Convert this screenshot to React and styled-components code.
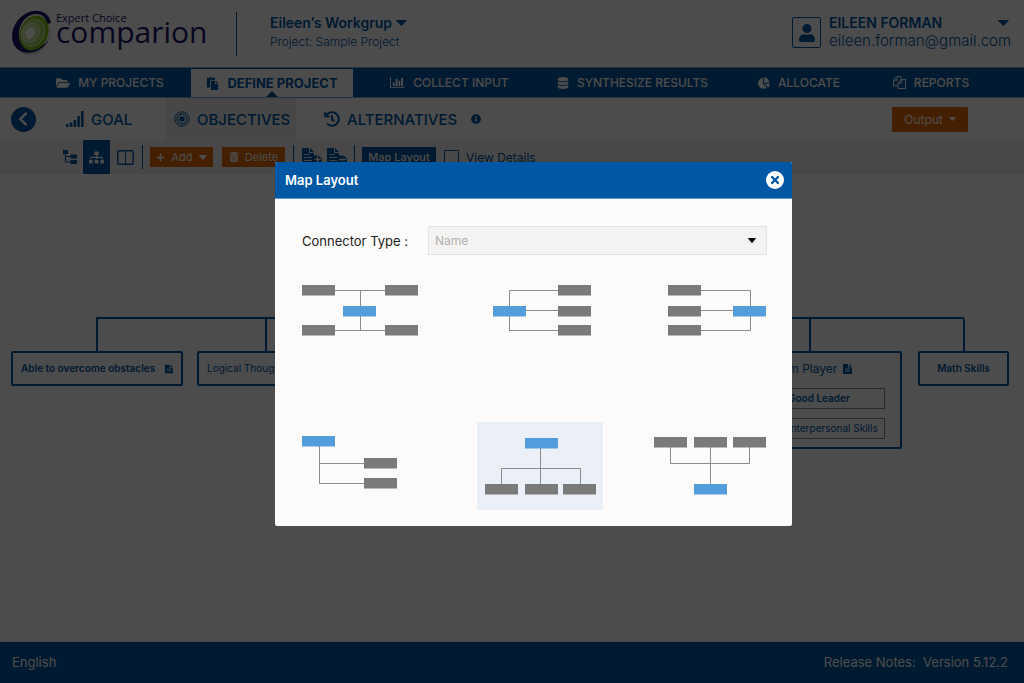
import React from "react";
import styled, { createGlobalStyle, css } from "styled-components";
import {
  FaCaretDown,
  FaChartPie,
  FaChevronLeft,
  FaDatabase,
  FaFolderOpen,
  FaHistory,
  FaInfoCircle,
  FaPaste,
  FaPlus,
  FaSitemap,
  FaTimes,
  FaTrashAlt,
  FaUser,
} from "react-icons/fa";

const blue = "#0057a4";
const orange = "#e66c00";

const GlobalStyle = createGlobalStyle`
  *, *::before, *::after { box-sizing: border-box; }
  body {
    margin: 0;
    background: #ffffff;
    color: ${blue};
    font-family: Inter, "Liberation Sans", sans-serif;
    font-size: 13px;
  }
  button, input, select { font: inherit; color: inherit; }
  button { cursor: pointer; }
`;

const Page = styled.div`
  display: flex;
  flex-direction: column;
  min-height: 100vh;
`;

/* ---------- header ---------- */

const Header = styled.header`
  display: flex;
  align-items: center;
  height: 68px;
  padding: 0 15px 0 12px;
  border-bottom: 1px solid #7fb0dc;
`;

const Logo = styled.a`
  display: flex;
  gap: 2px;
  width: 224px;
  color: #1c1464;
  text-decoration: none;
  font-family: "Open Sans", "Noto Sans", sans-serif;
  font-weight: 500;
`;

const LogoText = styled.span`
  display: flex;
  flex-direction: column;
`;

const LogoSmall = styled.span`
  padding-top: 3px;
  font-size: 11px;
  line-height: 12px;
`;

const LogoLarge = styled.span`
  font-size: 30px;
  line-height: 16px;
`;

const Workgroup = styled.div`
  display: flex;
  flex-direction: column;
  justify-content: center;
  gap: 2px;
  height: 44px;
  padding: 0 0 4px 33px;
  border-left: 1px solid ${blue};
`;

const PlainButton = styled.button`
  display: flex;
  align-items: center;
  gap: 4px;
  padding: 0;
  border: 0;
  background: none;
  font-size: 14px;
  font-weight: 600;
  line-height: 18px;
`;

const ProjectName = styled.span`
  font-size: 12px;
  font-weight: 300;
  line-height: 16px;
`;

const Account = styled.div`
  display: flex;
  align-items: center;
  gap: 8px;
  margin-left: auto;
`;

const Avatar = styled.span`
  display: grid;
  place-items: center;
  width: 29px;
  height: 31px;
  margin-bottom: 2px;
  border: 1px solid ${blue};
  border-radius: 2px;
`;

const AccountText = styled.div`
  display: flex;
  flex-direction: column;
  width: 180px;
  padding-bottom: 4px;
`;

const AccountButton = styled(PlainButton)`
  justify-content: space-between;
`;

const Email = styled.span`
  font-size: 15px;
  font-weight: 300;
  line-height: 18px;
`;

/* ---------- navigation ---------- */

const Nav = styled.nav`
  display: grid;
  grid-template-columns: 162fr 162fr 193fr 173fr 160fr 104fr;
  height: 30px;
  padding: 0 41px 0 29px;
  background: ${blue};
  border-bottom: 1px solid #7fb0dc;
`;

const NavLink = styled.a`
  position: relative;
  display: flex;
  align-items: center;
  justify-content: center;
  gap: 8px;
  color: #ffffff;
  font-size: 12px;
  font-weight: 500;
  text-decoration: none;
  white-space: nowrap;
  svg { flex: none; }
  ${(p) =>
    p.$active &&
    css`
      margin-top: 1px;
      background: #ffffff;
      color: ${blue};
      font-size: 13px;
      font-weight: 700;
      &::after {
        content: "";
        position: absolute;
        bottom: 0;
        left: calc(50% - 6px);
        border: 6px solid transparent;
        border-top-width: 0;
        border-bottom-color: ${blue};
      }
    `}
`;

const SubNav = styled.nav`
  display: flex;
  align-items: center;
  height: 42px;
  padding: 0 56px 0 11px;
`;

const BackButton = styled.button`
  display: grid;
  place-items: center;
  width: 25px;
  height: 25px;
  margin-right: 22px;
  padding: 0 2px 0 0;
  border: 0;
  border-radius: 50%;
  background: ${blue};
  color: #ffffff;
`;

const Tab = styled.a`
  display: flex;
  align-items: center;
  gap: 7px;
  height: 100%;
  width: ${(p) => p.$width}px;
  padding-left: ${(p) => p.$inset || 8}px;
  background: ${(p) => (p.$active ? "#ededed" : "none")};
  color: ${blue};
  font-size: 15px;
  font-weight: 500;
  text-decoration: none;
  white-space: nowrap;
`;

const OrangeButton = styled.button`
  display: flex;
  align-items: center;
  justify-content: center;
  gap: 6px;
  width: ${(p) => p.$width}px;
  height: ${(p) => p.$height}px;
  padding: 0;
  border: 0;
  border-radius: 1px;
  background: ${orange};
  color: #ffffff;
  font-size: ${(p) => p.$size}px;
`;

const SubNavEnd = styled.div`
  margin-left: auto;
`;

/* ---------- toolbar ---------- */

const Toolbar = styled.div`
  display: flex;
  align-items: center;
  height: 34px;
  padding-left: 57px;
  background: #f0f0f0;
`;

const ToolIcon = styled.button`
  display: grid;
  place-items: center;
  width: ${(p) => p.$width || 27}px;
  height: 100%;
  padding: 0;
  border: 0;
  background: ${(p) => (p.$active ? blue : "none")};
  color: ${(p) => (p.$active ? "#ffffff" : blue)};
`;

const Divider = styled.span`
  width: 1px;
  height: 24px;
  margin: 0 7px 0 ${(p) => p.$before || 8}px;
  background: ${blue};
`;

const ButtonPair = styled.div`
  display: flex;
  gap: 9px;
`;

const LayoutButton = styled.button`
  width: 74px;
  height: 20px;
  padding: 0;
  border: 0;
  background: ${blue};
  color: #ffffff;
  font-size: 11px;
  font-weight: 500;
`;

const CheckLabel = styled.label`
  display: flex;
  align-items: center;
  gap: 7px;
  margin-left: 8px;
  font-size: 12px;
`;

const Checkbox = styled.input`
  appearance: none;
  width: 15px;
  height: 15px;
  margin: 0;
  border: 1px solid ${blue};
  border-radius: 1px;
`;

/* ---------- hierarchy ---------- */

const Canvas = styled.main`
  flex: 1;
  padding: 143px 15px 0 11px;
`;

const Rail = styled.div`
  height: 2px;
  margin: 0 45px 0 85px;
  background: ${blue};
`;

const Branches = styled.div`
  display: flex;
  align-items: flex-start;
`;

const Branch = styled.div`
  display: flex;
  flex-direction: column;
  width: ${(p) => p.$width}px;
  margin-left: ${(p) => p.$before || "0"};
  &::before {
    content: "";
    align-self: center;
    width: 2px;
    height: 32px;
    background: ${blue};
  }
`;

const Node = styled.div`
  display: flex;
  flex-direction: column;
  gap: 12px;
  min-height: 35px;
  padding: 8px;
  border: 2px solid ${blue};
  border-radius: 2px;
`;

const NodeTitle = styled.div`
  display: flex;
  align-items: center;
  justify-content: ${(p) => p.$align || "flex-start"};
  gap: ${(p) => p.$gap || 6}px;
  font-size: ${(p) => p.$size || 10}px;
  font-weight: ${(p) => p.$weight || 400};
  line-height: 15px;
  white-space: nowrap;
`;

const SubNode = styled.div`
  width: 106px;
  height: 21px;
  padding-left: 8px;
  border: 1px solid #8a8a8a;
  font-size: 10px;
  font-weight: ${(p) => p.$weight || 400};
  line-height: 19px;
  white-space: nowrap;
`;

const SubNodes = styled.div`
  display: flex;
  flex-direction: column;
  align-items: flex-end;
  gap: 9px;
  padding-right: 7px;
`;

/* ---------- footer ---------- */

const Footer = styled.footer`
  display: flex;
  align-items: center;
  justify-content: space-between;
  height: 41px;
  padding: 0 16px 1px 12px;
  background: ${blue};
  color: #ffffff;
  font-size: 13px;
  white-space: pre;
`;

/* ---------- dialog ---------- */

const Overlay = styled.div`
  position: fixed;
  inset: 0;
  display: flex;
  align-items: flex-start;
  justify-content: center;
  padding: 162px 0 0 43px;
  background: rgba(0, 0, 0, 0.7);
`;

const Dialog = styled.section`
  width: 517px;
  border-radius: 2px;
  overflow: hidden;
  background: #fcfbf9;
  color: #222222;
`;

const DialogHeader = styled.div`
  display: flex;
  align-items: center;
  justify-content: space-between;
  height: 37px;
  padding: 0 8px 0 10px;
  border-bottom: 1px solid #5e9ddb;
  background: #0057a4;
  color: #ffffff;
`;

const DialogTitle = styled.h2`
  margin: 0;
  font-size: 13px;
  font-weight: 600;
`;

const CloseButton = styled.button`
  display: grid;
  place-items: center;
  width: 18px;
  height: 18px;
  padding: 0;
  border: 0;
  border-radius: 50%;
  background: #ffffff;
  color: #0057a4;
`;

const DialogBody = styled.div`
  padding: 27px 25px 16px 27px;
`;

const Field = styled.div`
  display: flex;
  align-items: center;
  label { width: 126px; font-size: 13px; }
`;

const SelectBox = styled.div`
  position: relative;
  flex: 1;
  svg {
    position: absolute;
    top: 12px;
    right: 11px;
    color: #000000;
    pointer-events: none;
  }
`;

const Select = styled.select`
  display: block;
  appearance: none;
  width: 100%;
  height: 29px;
  padding: 0 6px;
  border: 1px solid #e3e3e1;
  border-radius: 0;
  background: #f4f3f1;
  color: #b1b1b1;
  font-size: 12px;
`;

const Options = styled.div`
  display: grid;
  grid-template-columns: 175px 1fr 126px;
  row-gap: 67px;
  margin-top: 12px;
`;

const Option = styled.button`
  width: 126px;
  height: 88px;
  padding: 0;
  border: 0;
  background: ${(p) => (p.$active ? "#ebf0f8" : "none")};
  svg { display: block; }
`;

/* ---------- drawings ---------- */

const LogoMark = () => (
  <svg width="42" height="50" viewBox="0 0 42 50" aria-hidden="true">
    <ellipse cx="20" cy="25" rx="18" ry="22" fill="#b9b9b9" opacity=".5" transform="rotate(24 20 25)" />
    <ellipse cx="20" cy="23" rx="17" ry="21" fill="#ffffff" transform="rotate(24 20 23)" />
    <path d="M39 14C37 3 26-1 15 4C2 10-3 26 2 36C9 48 28 46 37 31C29 40 15 43 9 33C4 23 9 10 19 6C27 3 34 7 35 15Z" fill="#1c1464" />
    <ellipse cx="22" cy="24" rx="14" ry="18" fill="#7fc31c" transform="rotate(24 22 24)" />
    <ellipse cx="21" cy="24" rx="11" ry="14" fill="#a3d45e" stroke="#d3ecb0" transform="rotate(24 21 24)" />
    <ellipse cx="19" cy="24" rx="8" ry="10" fill="#c3e397" stroke="#e3f3cc" transform="rotate(24 19 24)" />
    <ellipse cx="18" cy="24" rx="5" ry="6" fill="#ffffff" transform="rotate(24 18 24)" />
  </svg>
);

const ChartIcon = () => (
  <svg width="15" height="13" viewBox="0 0 2048 1792" fill="currentColor" aria-hidden="true">
    <path d="M640 896v512h-256v-512h256zm384-512v1024h-256v-1024h256zm1024 1152v128h-2048v-1536h128v1408h1920zm-640-896v768h-256v-768h256zm384-384v1152h-256v-1152h256z" />
  </svg>
);

const FilesIcon = () => (
  <svg width="13" height="13" viewBox="0 0 1792 1792" fill="currentColor" aria-hidden="true">
    <path d="M1696 384q40 0 68 28t28 68v1216q0 40-28 68t-68 28h-960q-40 0-68-28t-28-68v-288h-544q-40 0-68-28t-28-68v-672q0-40 20-88t48-76l408-408q28-28 76-48t88-20h416q40 0 68 28t28 68v328q68-40 128-40h416zm-544 213l-299 299h299v-299zm-640-384l-299 299h299v-299zm196 647l316-316v-416h-384v416q0 40-28 68t-68 28h-416v640h512v-256q0-40 20-88t48-76zm956 804v-1152h-384v416q0 40-28 68t-68 28h-416v640h896z" />
  </svg>
);

const SignalIcon = () => (
  <svg width="18" height="16" viewBox="0 0 18 16" fill="currentColor" aria-hidden="true">
    <rect x="0" y="13" width="2.6" height="3" rx=".5" />
    <rect x="3.8" y="11.5" width="2.6" height="4.5" rx=".5" />
    <rect x="7.6" y="9" width="2.6" height="7" rx=".5" />
    <rect x="11.3" y="5" width="2.6" height="11" rx=".5" />
    <rect x="15" y="0" width="2.6" height="16" rx=".5" />
  </svg>
);

const TargetIcon = () => (
  <svg width="16" height="16" viewBox="0 0 16 16" fill="none" stroke="currentColor" aria-hidden="true">
    <circle cx="8" cy="8" r="7.2" strokeWidth="1" />
    <circle cx="8" cy="8" r="4.9" strokeWidth="1.1" />
    <circle cx="8" cy="8" r="2.7" fill="currentColor" stroke="none" />
  </svg>
);

const TreeIcon = () => (
  <svg width="14" height="14" viewBox="0 0 14 14" aria-hidden="true">
    <path d="M2.5 3V12H8M2.5 6.5H8" fill="none" stroke="currentColor" strokeWidth="1.2" />
    <path d="M0 0H5V4H0ZM7.5 4.5H14V8.5H7.5ZM7.5 10H14V14H7.5Z" fill="currentColor" />
  </svg>
);

const ColumnsIcon = () => (
  <svg width="17" height="15" viewBox="0 0 17 15" fill="none" stroke="currentColor" aria-hidden="true">
    <rect x=".8" y=".8" width="15.4" height="13.4" rx="1.2" strokeWidth="1.4" />
    <path d="M8.5 1V14" strokeWidth="1" />
  </svg>
);

const PagesIcon = ({ minus }) => (
  <svg width="20" height="18" viewBox="0 0 20 18" fill="currentColor" aria-hidden="true">
    <path d="M0 0H7V5H12V17H0Z" />
    <path d="M8 0L12 4H8Z" />
    <path d="M2 6.5H8M2 9.5H10M2 12.5H10" stroke="#f0f0f0" strokeWidth=".9" />
    <path d="M11 9.5Q12 6.5 15 7.5Q19.500 8 20 12V17H11Z" />
    <path d={minus ? "M12 11.500H19" : "M12.500 11.500H19M15.700 8.300V14.700"} stroke="#f0f0f0" strokeWidth="1.500" />
  </svg>
);

const NoteIcon = () => (
  <svg width="9" height="10" viewBox="0 0 9 10" aria-hidden="true">
    <path d="M0 0H5V3.500H9V10H0ZM6 0L9 2.800H6Z" fill="currentColor" />
    <path d="M2 5H7M2 7H7" stroke="#ffffff" strokeWidth=".8" />
  </svg>
);

const Caret = ({ width = 9, height = 5 }) => (
  <svg width={width} height={height} viewBox="0 0 10 6" preserveAspectRatio="none" fill="currentColor" aria-hidden="true">
    <path d="M0 .5Q0 0 .6 0H9.4Q10 0 9.8 .6L5.500 5.600Q5 6 4.500 5.600L.2 .9Z" />
  </svg>
);

/* Each layout lists its root box, its child boxes and the connector path. */
const layouts = [
  { name: "Both sides", root: [41, 39], boxes: [[0, 18], [83, 18], [0, 58], [83, 58]], lines: "M33 23.5H83M33 63.5H83M58.5 23V64" },
  { name: "Left to right", root: [16, 39], boxes: [[81, 18], [81, 39], [81, 58]], lines: "M81 23.5H32.5V63.5H81M49 43.5H81" },
  { name: "Right to left", root: [92, 39], boxes: [[27, 18], [27, 39], [27, 58]], lines: "M60 23.5H109.5V63.5H60M60 43.5H92" },
  { name: "Indented list", root: [0, 14], boxes: [[62, 36], [62, 56]], lines: "M17.5 23V61.5H62M17.5 41.5H62" },
  { name: "Top to bottom", root: [48, 16], boxes: [[8, 62], [48, 62], [86, 62]], lines: "M63.5 26V62M24.5 62V46.5H103.5V62", active: true },
  { name: "Bottom to top", root: [53, 62], boxes: [[13, 15], [53, 15], [92, 15]], lines: "M69.5 25V62M29.5 25V41.5H108.5V25" },
];

const LayoutDrawing = ({ root, boxes, lines }) => (
  <svg width="126" height="88" viewBox="0 0 126 88" aria-hidden="true">
    <path d={lines} fill="none" stroke="#8b8b8b" />
    {boxes.map(([x, y]) => (
      <rect key={`${x}-${y}`} x={x} y={y} width="33" height="10.5" fill="#7a7a7a" />
    ))}
    <rect x={root[0]} y={root[1]} width="33" height="10.5" fill="#549ddd" />
  </svg>
);

export default function App() {
  return (
    <>
      <GlobalStyle />
      <Page>
        <Header>
          <Logo href="#home">
            <LogoMark />
            <LogoText>
              <LogoSmall>Expert Choice</LogoSmall>
              <LogoLarge>comparion</LogoLarge>
            </LogoText>
          </Logo>
          <Workgroup>
            <PlainButton>
              Eileen’s Workgrup <Caret width={11} height={6} />
            </PlainButton>
            <ProjectName>Project: Sample Project</ProjectName>
          </Workgroup>
          <Account>
            <Avatar><FaUser size={18} /></Avatar>
            <AccountText>
              <AccountButton>
                EILEEN FORMAN <Caret width={11} height={6} />
              </AccountButton>
              <Email>eileen.forman@gmail.com</Email>
            </AccountText>
          </Account>
        </Header>

        <Nav>
          <NavLink href="#projects"><FaFolderOpen size={14} /> MY PROJECTS</NavLink>
          <NavLink href="#define" $active><FaPaste size={13} /> DEFINE PROJECT</NavLink>
          <NavLink href="#collect"><ChartIcon /> COLLECT INPUT</NavLink>
          <NavLink href="#synthesize"><FaDatabase size={12} /> SYNTHESIZE RESULTS</NavLink>
          <NavLink href="#allocate"><FaChartPie size={12} /> ALLOCATE</NavLink>
          <NavLink href="#reports"><FilesIcon /> REPORTS</NavLink>
        </Nav>

        <SubNav>
          <BackButton aria-label="Back"><FaChevronLeft size={16} /></BackButton>
          <Tab href="#goal" $width={108}><SignalIcon /> GOAL</Tab>
          <Tab href="#objectives" $width={130} $active><TargetIcon /> OBJECTIVES</Tab>
          <Tab href="#alternatives" $width={175} $inset={28}><FaHistory size={16} /> ALTERNATIVES</Tab>
          <FaInfoCircle size={10} />
          <SubNavEnd>
            <OrangeButton $width={76} $height={25} $size={12}>
              Output <Caret width={7} height={4} />
            </OrangeButton>
          </SubNavEnd>
        </SubNav>

        <Toolbar>
          <ToolIcon aria-label="Tree view" $width={26}><TreeIcon /></ToolIcon>
          <ToolIcon aria-label="Map view" $active><FaSitemap size={15} /></ToolIcon>
          <ToolIcon aria-label="Split view" $width={31}><ColumnsIcon /></ToolIcon>
          <Divider $before={1} />
          <ButtonPair>
            <OrangeButton $width={63} $height={20} $size={11}>
              <FaPlus size={9} /> Add <Caret width={8} />
            </OrangeButton>
            <OrangeButton $width={63} $height={20} $size={11}>
              <FaTrashAlt size={10} /> Delete
            </OrangeButton>
          </ButtonPair>
          <Divider />
          <ToolIcon aria-label="Expand notes" $width={22}><PagesIcon /></ToolIcon>
          <ToolIcon aria-label="Collapse notes"><PagesIcon minus /></ToolIcon>
          <Divider $before={4} />
          <LayoutButton>Map Layout</LayoutButton>
          <CheckLabel>
            <Checkbox type="checkbox" /> View Details
          </CheckLabel>
        </Toolbar>

        <Canvas>
          <Rail />
          <Branches>
            <Branch $width={172}>
              <Node>
                <NodeTitle $weight={600} $gap={10}>Able to overcome obstacles <NoteIcon /></NodeTitle>
              </Node>
            </Branch>
            <Branch $width={138} $before="14px">
              <Node><NodeTitle>Logical Thoughts</NodeTitle></Node>
            </Branch>
            <Branch $width={184} $before="auto">
              <Node>
                <NodeTitle $align="center" $size={12}>Team Player <NoteIcon /></NodeTitle>
                <SubNodes>
                  <SubNode $weight={600}>Good Leader</SubNode>
                  <SubNode>Interpersonal Skills</SubNode>
                </SubNodes>
              </Node>
            </Branch>
            <Branch $width={91} $before="16px">
              <Node><NodeTitle $align="center" $weight={600}>Math Skills</NodeTitle></Node>
            </Branch>
          </Branches>
        </Canvas>

        <Footer>
          <span>English</span>
          <span>Release Notes:  Version 5.12.2</span>
        </Footer>
      </Page>

      <Overlay>
        <Dialog role="dialog" aria-modal="true" aria-labelledby="map-layout-title">
          <DialogHeader>
            <DialogTitle id="map-layout-title">Map Layout</DialogTitle>
            <CloseButton aria-label="Close"><FaTimes size={12} /></CloseButton>
          </DialogHeader>
          <DialogBody>
            <Field>
              <label htmlFor="connector-type">Connector Type :</label>
              <SelectBox>
                <Select id="connector-type" defaultValue="">
                  <option value="">Name</option>
                </Select>
                <Caret width={8} />
              </SelectBox>
            </Field>
            <Options>
              {layouts.map((layout) => (
                <Option key={layout.name} aria-label={layout.name} aria-pressed={!!layout.active} $active={layout.active}>
                  <LayoutDrawing {...layout} />
                </Option>
              ))}
            </Options>
          </DialogBody>
        </Dialog>
      </Overlay>
    </>
  );
}
